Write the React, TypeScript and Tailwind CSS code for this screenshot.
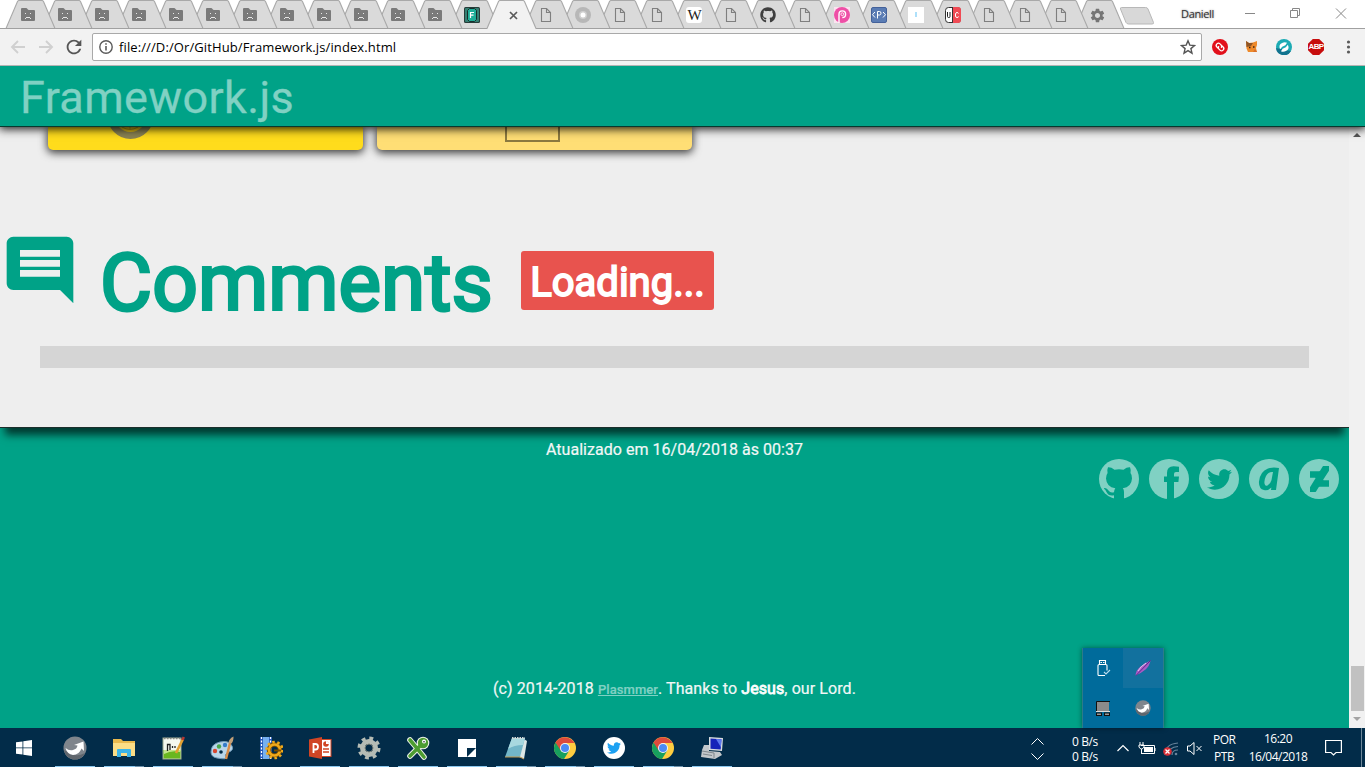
import type { ReactNode } from "react";
import { FaGithub, FaTwitter } from "react-icons/fa";
import { MdComment, MdSettings, MdRefresh } from "react-icons/md";

const SadFolder = () => (
  <svg width="14" height="14" viewBox="0 0 14 14">
    <path d="M1 0h4q1 0 1.500 1t1.500 1h5q1 0 1 1v9q0 1-1 1H1q-1 0-1-1V1q0-1 1-1z" fill="#7a7a7a" />
    <path d="M4 5h1v1H4zM9 5h1v1H9zM5 9h4v1H5zM4 10h1v1H4zM9 10h1v1H9z" fill="#e6e6e6" />
  </svg>
);

const Page = () => (
  <svg width="12" height="14" viewBox="0 0 12 14">
    <path d="M1.500.5h5l4 4v9h-9zM6.500.5v4h4" fill="none" stroke="#7f7f7f" strokeWidth="1.1" />
  </svg>
);

const FrameworkIcon = () => (
  <svg width="16" height="16" viewBox="0 0 16 16">
    <rect width="16" height="16" rx="1.5" fill="#263c39" />
    <rect x="1" y="1" width="14" height="14" rx="1" fill="#357f72" />
    <path d="M5.500 1.500h5l2 2v9l-2 2h-5l-2-2v-9z" fill="#1fae98" stroke="#182f2c" />
    <path d="M6.500 11V5.500H10M6.500 8.200h3" fill="none" stroke="#fff" strokeWidth="1.200" />
  </svg>
);

const Ring = () => (
  <svg width="16" height="16" viewBox="0 0 16 16">
    <circle cx="8" cy="8" r="8" fill="#b7b7b7" />
    <circle cx="8" cy="8" r="4" fill="#cfcfcf" />
    <circle cx="8" cy="8" r="2.5" fill="#fff" />
  </svg>
);

const Wiki = () => (
  <span className="flex h-4 w-4 items-center justify-center rounded-[3px] bg-white font-['Liberation_Serif',serif] text-[15px] leading-none tracking-[-1px] text-[#222]">
    W
  </span>
);

const PinkP = () => (
  <svg width="16" height="16" viewBox="0 0 16 16">
    <rect width="16" height="16" fill="#fbe3f0" />
    <circle cx="8" cy="8" r="8" fill="#ee4fa6" />
    <path d="M5 16V7.200a3.300 3.300 0 1 1 3.300 3.300" fill="none" stroke="#fff" strokeWidth="1.400" />
    <circle cx="8.300" cy="7.200" r="1.400" fill="none" stroke="#fff" strokeWidth=".8" />
  </svg>
);

const CodeP = () => (
  <svg width="16" height="16" viewBox="0 0 16 16">
    <rect x=".5" y=".5" width="15" height="15" rx="1.5" fill="#5a7cb4" stroke="#44619a" />
    <path d="M4 5L1.500 7.700 4 10.500M12 5l2.500 2.700L12 10.500M6.500 11.500v-7h2q1.500 0 1.500 1.700T8.500 8h-2" fill="none" stroke="#fff" />
  </svg>
);

const InfoIcon = () => (
  <svg width="16" height="16" viewBox="0 0 16 16">
    <rect width="16" height="16" fill="#fff" />
    <rect x="7" y="5" width="2" height="5" fill="#aee0fa" />
  </svg>
);

const UC = () => (
  <svg width="16" height="16" viewBox="0 0 16 16">
    <rect x=".5" y=".5" width="15" height="15" rx="3" fill="#fff" stroke="#333" />
    <path d="M8 0h5q3 0 3 3v10q0 3-3 3H8z" fill="#f04a54" />
    <path d="M7.500 0v16" stroke="#333" />
    <path d="M2.500 5v4.500q0 1 1 1h.5q1 0 1-1V5" fill="none" stroke="#222" />
    <path d="M13.500 6.500q-.3-1-1.500-1t-1.500 1.500v2q0 1.500 1.500 1.500t1.500-1" fill="none" stroke="#fff" />
  </svg>
);

const CloseX = () => (
  <svg width="9" height="9" viewBox="0 0 9 9">
    <path d="M1 1l7 7M8 1L1 8" stroke="#5a5a5a" strokeWidth="1.7" />
  </svg>
);

const GitCat = () => <FaGithub size={16} color="#3f3f3f" />;
const Gear = () => <MdSettings size={17} color="#757575" />;

type TabSpec = { icon: () => ReactNode; active?: boolean; narrow?: boolean };

const tabs: TabSpec[] = [
  ...Array.from({ length: 12 }, () => ({ icon: SadFolder })),
  { icon: FrameworkIcon },
  { icon: CloseX, active: true },
  { icon: Page },
  { icon: Ring },
  { icon: Page },
  { icon: Page },
  { icon: Wiki },
  { icon: Page },
  { icon: GitCat },
  { icon: Page },
  { icon: PinkP },
  { icon: CodeP },
  { icon: InfoIcon },
  { icon: UC, narrow: true },
  { icon: Page, narrow: true },
  { icon: Page, narrow: true },
  { icon: Page, narrow: true },
  { icon: Gear, narrow: true },
];

const Tab = ({ tab, z }: { tab: TabSpec; z: number }) => (
  <div className={`relative h-[29px] shrink-0 ${tab.narrow ? "w-9" : "w-[37px]"}`} style={{ zIndex: tab.active ? 60 : z }}>
    <svg className="absolute top-0 left-0 overflow-visible" width="49" height="29" viewBox="0 0 49 29">
      <path d="M0 29L.5 28L11.500 1.500Q12 .5 13 .5H36Q37 .5 37.500 1.500L48.500 28L49 29z" fill={tab.active ? "#f2f2f2" : "#dadada"} />
      <path d="M0 28.500L11.500 1.500Q12 .5 13 .5H36Q37 .5 37.500 1.500L49 28.500" fill="none" stroke="#a9a9a9" strokeWidth="1.1" />
      {!tab.active && <path d="M0 28.500H49" stroke="#a0a0a0" />}
    </svg>
    <div className={`relative flex h-[30px] items-center justify-center ${tab.active ? "w-[45px] pl-2" : "w-11"}`}>
      <tab.icon />
    </div>
  </div>
);

const TabStrip = () => (
  <div className="relative z-20 flex h-[29px] bg-white pl-[6px] shadow-[inset_0_-1px_0_#a0a0a0]">
    {tabs.map((t, i) => (
      <Tab key={i} tab={t} z={50 - i} />
    ))}
    <svg className="ml-[8px] mt-[7px] shrink-0" width="36" height="18" viewBox="0 0 36 18">
      <path d="M2.500.5H26.500Q28.500.5 29 2L34.500 15.500Q35 17 33 17H9.500Q8 17 7 15.500L1.500 2Q1 .5 2.500.5z" fill="#d8d8d8" stroke="#b8b8b8" />
    </svg>
    <span className="mt-[7px] ml-[26px] w-[64px] text-[11px] leading-[14px] tracking-[-0.35px] text-[#333] [text-shadow:0_0_2px_#777]">Daniell</span>
    <svg className="mt-[7px] shrink-0" width="103" height="13" viewBox="0 0 103 13" fill="none" stroke="#888">
      <path d="M0 6.500h10M45.500 3.500h7v7h-7zM47.500 3.500v-2h7v7h-2M91 1.500l10 10M101 1.500l-10 10" />
    </svg>
  </div>
);

const Toolbar = () => (
  <div className="relative z-20 flex h-[37px] items-center border-b border-[#b4b4b4] bg-[#f2f2f2] pl-[10px]">
    <svg width="44" height="14" viewBox="0 0 44 14" fill="none" stroke="#d0d0d0" strokeWidth="1.9">
      <path d="M15 7H2.500M8 1L2 7l6 6M29 7h12.500M36 1l6 6-6 6" />
    </svg>
    <MdRefresh className="ml-[9px]" size={22} color="#555" />
    <div className="ml-[7px] flex h-7 w-[1110px] items-center rounded-[2px] border border-[#a9a9a9] bg-white pr-[5px] pl-[6px]">
      <svg width="14" height="14" viewBox="0 0 14 14">
        <circle cx="7" cy="7" r="6.200" fill="none" stroke="#5a5a5a" strokeWidth="1.400" />
        <path d="M7 6v4.500M7 3.200v1.600" stroke="#5a5a5a" strokeWidth="1.600" />
      </svg>
      <span className="ml-[6px] flex-1 pt-px text-[13px] tracking-[0.11px] text-black">file:///D:/Or/GitHub/Framework.js/index.html</span>
      <svg width="16" height="16" viewBox="0 0 16 16">
        <path d="M8 1.800l1.800 4.300 4.700.4-3.600 3.100 1.100 4.600L8 11.700l-4 2.500 1.100-4.600L1.500 6.500l4.700-.4z" fill="none" stroke="#555" strokeWidth="1.400" />
      </svg>
    </div>
    <div className="ml-[10px] flex items-center gap-4">
      <svg width="16" height="16" viewBox="0 0 16 16">
        <circle cx="8" cy="8" r="8" fill="#e2101b" />
        <g transform="rotate(45 8 8)" fill="none" stroke="#fff" strokeWidth="1.300">
          <path d="M8.500 10.200H5.800a2.200 2.200 0 0 1 0-4.400h1.700q1.500.2 2 2" />
          <path d="M7.500 5.800h2.700a2.200 2.200 0 0 1 0 4.400H8.500q-1.500-.2-2-2" />
        </g>
      </svg>
      <svg width="16" height="16" viewBox="0 0 16 16">
        <path d="M2 2l3 2 4-.5L13 2v4l-1 3 1 4H4L2.500 9.500z" fill="#ee8a2b" />
        <path d="M2 2l3 2h4L7 7 2.500 8z" fill="#8f5526" />
        <path d="M5 8.500h1.500M9 8h1.500" stroke="#3b2415" strokeWidth="1.300" />
        <path d="M11 10l2 3h-4z" fill="#d9702a" />
      </svg>
      <svg width="16" height="16" viewBox="0 0 16 16">
        <circle cx="8" cy="8" r="8" fill="#1cabb4" />
        <path d="M0 9a8 8 0 0 0 15 3L9 11z" fill="#12738f" />
        <g transform="rotate(-25 8 8)">
          <path d="M3.500 8.500Q3.500 3.500 8 3.500q3 0 4.500 2L10 7H6.500zM12.500 7.500q0 5-4.500 5-3 0-4.500-2L6 9h3.500z" fill="#fff" />
        </g>
      </svg>
      <div className="flex h-4 w-4 items-center justify-center bg-[#c70d0d] font-['Liberation_Sans',sans-serif] text-[8px] font-bold leading-none tracking-[-0.6px] text-white [clip-path:polygon(30%_0,70%_0,100%_30%,100%_70%,70%_100%,30%_100%,0_70%,0_30%)]">ABP</div>
      <svg width="16" height="16" viewBox="0 0 16 16" fill="#5a5a5a">
        <circle cx="8.500" cy="3" r="1.600" />
        <circle cx="8.500" cy="8" r="1.600" />
        <circle cx="8.500" cy="13" r="1.600" />
      </svg>
    </div>
  </div>
);

const Cards = () => (
  <div className="flex gap-[14px] pl-12">
    <div className="h-[23px] w-[315px] rounded-b-[5px] bg-[#ffdc1c] pl-[60px] shadow-[0_2px_8px_1px_rgba(0,0,0,0.75)]">
      <svg width="46" height="13" viewBox="0 0 46 13">
        <circle cx="22.500" cy="-11" r="19.500" fill="#dcb817" stroke="#8b8353" strokeWidth="7" />
        <path d="M14 0q8 5 16 0M22 0v3" stroke="#a28c1c" fill="none" />
      </svg>
    </div>
    <div className="h-[23px] w-[315px] rounded-b-[5px] bg-[#ffde75] pl-32 shadow-[0_2px_8px_1px_rgba(0,0,0,0.75)]">
      <div className="h-[15px] w-[55px] border-2 border-t-0 border-[#8c7a40]" />
    </div>
  </div>
);

const Disc = ({ children }: { children: ReactNode }) => (
  <div className="flex h-10 w-10 items-center justify-center rounded-full bg-[#80d1c3] text-[#00a287]">{children}</div>
);

const Footer = () => (
  <footer className="flex h-[301px] flex-col bg-[#00a287] text-[#f2f7f6]">
    <p className="relative z-10 pt-[13px] text-center text-base leading-[19px] tracking-[0.03px] [-webkit-text-stroke:0.2px_#f2f7f6]">Atualizado em 16/04/2018 às 00:37</p>
    <div className="flex justify-end gap-[10px] pr-[10px]">
      <Disc>
        <svg width="40" height="40" viewBox="0 0 40 40" fill="currentColor">
          <path d="M9 8.300Q12 8 15.500 10.700 20 9.700 24.500 10.700 28 8 31 8.300 32.200 11 31.500 14 33.200 16 33 19.500 32.500 28 23.800 29.200 25 30.500 25 33V40H15V36.300Q9.500 37.500 7.500 33 6.500 30.800 5 29.800 4.600 28.800 6 28.900 8 29.200 9.500 31.500 11.500 34.500 15 33.200 15.200 30.500 16.300 29.200 7.500 28 7 19.500 7 16 8.600 14 7.800 11 9 8.300z" />
        </svg>
      </Disc>
      <Disc>
        <svg width="40" height="40" viewBox="0 0 40 40" fill="currentColor">
          <path d="M18 40V23H15V17.500H18V14Q18 7.300 24.500 7.300 27.800 7.300 30 7.800V13H27Q25 13 25 15V17.500H30L29.400 23H25V40z" />
        </svg>
      </Disc>
      <Disc><FaTwitter size={25} /></Disc>
      <Disc>
        <svg width="22" height="24" viewBox="0 0 22 24">
          <path d="M21 1L18 23h-5l.4-2.500Q10 24 6 23 .5 21.500 1 14.500 2 4.500 10 1.500 14 0 21 1zM15 5Q10.500 4.500 8 9 6 13 6.500 16.500 7 19.500 9.500 18.500 12.500 17 13.500 13z" fill="currentColor" />
        </svg>
      </Disc>
      <Disc>
        <svg width="19" height="26" viewBox="0 0 320 512" preserveAspectRatio="none">
          <path d="M320 93.200l-98.200 179.100 7.400 9.500H320v127.700H159.100l-13.500 9.200-43.700 84c-.3 0-8.600 8.600-9.200 9.200H0v-93.200l93.200-179.400-7.400-9.200H0V102.500h156l13.500-9.200 43.700-84c.3 0 8.600-8.600 9.200-9.200H320v93.100z" fill="currentColor" />
        </svg>
      </Disc>
    </div>
    <p className="mt-[180px] text-center text-base leading-[19px] tracking-[0.08px] [-webkit-text-stroke:0.2px]">
      (c) 2014-2018 <span className="text-[13px] font-medium text-[#80d1c3] underline">Plasmmer</span>. Thanks to{" "}
      <span className="[-webkit-text-stroke:0.8px_white]">Jesus</span>, our Lord.
    </p>
  </footer>
);

const Scrollbar = () => (
  <div className="flex w-4 flex-col items-center bg-[#f1f1f1]">
    <svg width="16" height="16" viewBox="0 0 16 16"><path d="M4 10l4-4 4 4z" fill="#555" /></svg>
    <div className="mt-[523px] h-[45px] w-[13px] bg-[#c1c1c1]" />
    <svg width="16" height="16" viewBox="0 0 16 16"><path d="M4 6l4 4 4-4z" fill="#a3a3a3" /></svg>
  </div>
);

const Swirl = ({ size }: { size: number }) => (
  <svg width={size} height={size} viewBox="0 0 24 24">
    <circle cx="12" cy="12" r="11.500" fill="#7f858c" />
    <path d="M1 14a11 11 0 0 0 21 3q-8 4-12 1z" fill="#60666d" />
    <path d="M2.500 12Q6 15 10 14t4.500-4.500L11 9 20.500 5.500 21 15l-2.500-2.500Q16 19 10 19 4 18 2.500 12z" fill="#fff" />
  </svg>
);

const TrayPopup = () => (
  <div className="absolute top-[648px] left-[1082px] grid h-20 w-[82px] grid-cols-2 grid-rows-2 place-items-center border border-y-0 border-[#2c7b8a] bg-[#006b9b] shadow-[0_0_5px_rgba(0,0,0,0.45)]">
    <svg width="16" height="18" viewBox="0 0 16 18" fill="none" stroke="#fff" strokeWidth="1.100">
      <path d="M4.500 5.500v-4h6v4M5.500 3.500h1.500M8 3.500h1.500M10 16.500H4q-1 0-1-1V6.500q0-1 1-1h7q1 0 1 1v5" />
      <path d="M9 13l2 2 4-4" stroke="#b9dcee" />
    </svg>
    <div className="flex h-full w-full items-center justify-center bg-[#12719e]">
      <svg width="18" height="18" viewBox="0 0 18 18">
        <path d="M1.500 16.500Q2 11 6.500 7.500T16.500 1.500Q15.500 7 11.500 10.500T1.500 16.500z" fill="#a95cc6" />
        <path d="M2 16.500L16.500 1.500" stroke="#5f2a8c" />
        <path d="M4 12q2.500-4.500 8-8" stroke="#e2c9ef" fill="none" />
      </svg>
    </div>
    <svg width="16" height="17" viewBox="0 0 16 17">
      <path d="M1.500 11V1.500H15" fill="none" stroke="#111" />
      <rect x="2" y="2" width="12" height="9" fill="#8b8b8b" />
      <path d="M1 11.500h14" stroke="#ddd" />
      <rect x="1.500" y="13" width="5" height="2.500" fill="#999" stroke="#111" />
      <rect x="9.500" y="13" width="5" height="2.500" fill="#999" stroke="#111" />
    </svg>
    <Swirl size={16} />
  </div>
);

const Explorer = () => (
  <svg width="22" height="20" viewBox="0 0 22 20">
    <path d="M0 1h8l2 2h12v15H0z" fill="#e9b94e" />
    <path d="M0 5h22v13H0z" fill="#fbdd86" />
    <path d="M4 19v-7q0-1 1-1h12q1 0 1 1v7h-4v-4H8v4z" fill="#3bb4e8" />
  </svg>
);
const NotepadPP = () => (
  <svg width="23" height="24" viewBox="0 0 23 24">
    <rect x="1" y="2" width="18" height="21" fill="#f5f8ef" stroke="#9aa58d" />
    <path d="M1.500 14h17v8.500h-17z" fill="#69b71f" />
    <path d="M2 14h17l-1 2Q10 14 2 18z" fill="#c4e58c" />
    <path d="M2 2.500h17" stroke="#8b8b8b" strokeDasharray="1.500 1.500" strokeWidth="1.500" />
    <path d="M5.500 15V8.500H8V14M10.500 10v2M13 10v2" stroke="#222" fill="none" strokeWidth="1.300" />
    <path d="M14 17L21 3" stroke="#e2a032" strokeWidth="2.600" />
    <path d="M20.500 4l1.300-3" stroke="#b63832" strokeWidth="2.600" />
  </svg>
);
const Paint = () => (
  <svg width="25" height="25" viewBox="0 0 25 25">
    <path d="M1 16Q1 8 10 6t12 4q2 4-3 6t-3 5-9 1q-6-1-6-6z" fill="#b9d6ea" stroke="#6f9ab8" />
    <circle cx="5" cy="15" r="2.200" fill="#d8472f" />
    <circle cx="9" cy="10.500" r="2.200" fill="#49a74a" />
    <circle cx="15" cy="9" r="2.200" fill="#357cc9" />
    <circle cx="11" cy="16" r="1.800" fill="#022c49" />
    <path d="M16 23L20 7" stroke="#d98c48" strokeWidth="2.500" />
    <path d="M18.500 7q0-4 5-6.500 0 5-2 7z" fill="#c2a078" />
  </svg>
);
const FilmGear = () => (
  <svg width="24" height="24" viewBox="0 0 24 24">
    <rect x="1" y="1" width="12" height="22" fill="#2257b8" />
    <path d="M4 1h6v22H4z" fill="#76b0f0" />
    <path d="M2.500 1v22M11.500 1v22" stroke="#fff" strokeWidth="1.300" strokeDasharray="2 1.500" />
    <circle cx="15.500" cy="14" r="5.500" fill="none" stroke="#7a4d00" strokeWidth="4.500" />
    <circle cx="15.500" cy="14" r="5.500" fill="none" stroke="#f0aa1c" strokeWidth="2.600" />
    <circle cx="15.500" cy="14" r="8" fill="none" stroke="#f0aa1c" strokeWidth="2.600" strokeDasharray="2.500 2.530" />
    <path d="M15 14.500h7" stroke="#7a4d00" strokeWidth="2" />
  </svg>
);
const PowerPoint = () => (
  <svg width="24" height="24" viewBox="0 0 24 24">
    <rect x="12" y="3.500" width="11" height="17" fill="#fff" stroke="#d04525" />
    <path d="M15 13h6M15 16h6" stroke="#d04525" strokeWidth="1.400" />
    <circle cx="18" cy="8" r="2.800" fill="#d04525" />
    <path d="M18 8V5a3 3 0 0 1 3 3z" fill="#fff" />
    <path d="M1 3.500L14 1v22L1 20.500z" fill="#d04525" />
    <path d="M5.500 17V8H7.500q2.500 0 2.500 2.700T7.500 13.500H6" stroke="#fff" strokeWidth="1.800" fill="none" />
  </svg>
);
const BigGear = () => (
  <svg width="24" height="24" viewBox="0 0 24 24">
    <circle cx="12" cy="12" r="6.500" fill="none" stroke="#b5bcb5" strokeWidth="5" />
    <circle cx="12" cy="12" r="9.800" fill="none" stroke="#b5bcb5" strokeWidth="3.500" strokeDasharray="3.850 3.850" />
    <circle cx="12" cy="12" r="4" fill="#022c49" stroke="#7c857d" />
  </svg>
);
const GreenX = () => (
  <svg width="24" height="24" viewBox="0 0 24 24">
    <g fill="none" strokeLinecap="round">
      <path d="M4 4Q10 11 18 21M4 20L16 8" stroke="#eef2e9" strokeWidth="5.600" />
      <circle cx="17" cy="7" r="6.300" fill="#eef2e9" />
      <path d="M4 4Q10 11 18 21M4 20L16 8" stroke="#4c9c31" strokeWidth="3.600" />
    </g>
    <circle cx="17" cy="7" r="5.200" fill="#4c9c31" />
    <circle cx="18" cy="5.500" r="2" fill="#fff" />
    <circle cx="18" cy="5.700" r=".8" fill="#222" />
  </svg>
);
const Note = () => (
  <svg width="18" height="18" viewBox="0 0 18 18">
    <path d="M0 0h18v18H0z" fill="#fff" />
    <path d="M9 9h9L9 18z" fill="#022c49" />
  </svg>
);
const Notepad = () => (
  <svg width="24" height="24" viewBox="0 0 24 24">
    <path d="M20 3l3 2-3 18-5-2z" fill="#dde7e6" />
    <path d="M8 2h13l-5 19H1z" fill="#72b6c8" />
    <path d="M8 2h13l-2 7Q10 9 4 13z" fill="#a8d8df" />
    <path d="M8 2h13" stroke="#d0d6d6" strokeWidth="2" strokeDasharray="1.500 1" />
    <path d="M1 21h15l4 2" stroke="#c2974a" fill="none" />
  </svg>
);
const Chrome = () => (
  <svg width="22" height="22" viewBox="0 0 22 22">
    <circle cx="11" cy="11" r="11" fill="#ffcd40" />
    <path d="M11 11L1.500 5.500A11 11 0 0 0 10 22L15.300 13.500z" fill="#17a05e" />
    <path d="M1.500 5.500A11 11 0 0 1 20.500 6H11L6.700 13.500z" fill="#de4b3c" />
    <circle cx="11" cy="11" r="5" fill="#f4f4f4" />
    <circle cx="11" cy="11" r="4" fill="#4c8bf5" />
  </svg>
);
const Twitter = () => (
  <div className="flex h-[22px] w-[22px] items-center justify-center rounded-full bg-white">
    <FaTwitter size={14} color="#1da1f2" />
  </div>
);
const Computer = () => (
  <svg width="24" height="24" viewBox="0 0 24 24">
    <path d="M9 1l14 1-1 13-13-1z" fill="#d7dcdf" />
    <path d="M10.500 2.500l11 .8-.8 10.200-10.200-.8z" fill="#1624b9" />
    <path d="M16 3l5.500.3-.6 8z" fill="#5c78ee" />
    <path d="M4 9h5v6l11 1 2 3-7 4-14-2 1-7z" fill="#c3c8cb" />
    <path d="M2 15l12 2v5M3 18l9 1.500" stroke="#80878c" fill="none" />
  </svg>
);

type TaskApp = { icon: ReactNode; open?: boolean; many?: boolean };
const apps: TaskApp[] = [
  { icon: <Swirl size={24} />, open: true },
  { icon: <Explorer />, open: true, many: true },
  { icon: <NotepadPP />, open: true },
  { icon: <Paint />, open: true, many: true },
  { icon: <FilmGear /> },
  { icon: <PowerPoint />, open: true },
  { icon: <BigGear />, open: true },
  { icon: <GreenX />, open: true },
  { icon: <Note />, open: true },
  { icon: <Notepad />, open: true, many: true },
  { icon: <Chrome />, open: true, many: true },
  { icon: <Twitter />, open: true },
  { icon: <Chrome />, open: true, many: true },
  { icon: <Computer />, open: true },
];

const Taskbar = () => (
  <div className="flex h-[39px] bg-[#022c49] text-[12px] leading-[15px] text-white">
    <div className="flex w-[55px] items-center pl-4">
      <svg width="16" height="16" viewBox="0 0 16 16" fill="#fff">
        <path d="M0 2.300L6.500 1.400V7.500H0zM7.300 1.300L16 0v7.500H7.300zM0 8.300h6.500v6.200L0 13.700zM7.300 8.300H16V16l-8.700-1.300z" />
      </svg>
    </div>
    <div className="flex gap-[9px]">
      {apps.map((a, i) => (
        <div key={i} className="flex w-10 flex-col">
          <div className="flex h-[38px] items-center justify-center pt-[2px]">{a.icon}</div>
          {a.open && (
            <div className="flex h-px bg-[#8cc8ee]">
              {a.many && <div className="ml-auto w-[9px] bg-[#6e93ad]" />}
            </div>
          )}
        </div>
      ))}
    </div>
    <div className="ml-[299px] flex w-[41px] flex-col items-start justify-center gap-[8px] pt-[2px]">
      {["M0 6.500l6-6 6 6", "M0 .5l6 6 6-6"].map((d) => (
        <svg key={d} width="13" height="7" viewBox="0 0 12 7" fill="none" stroke="#fff"><path d={d} /></svg>
      ))}
    </div>
    <div className="flex w-[45px] flex-col pt-[6px] tracking-[-0.4px]">
      <span>0 B/s</span>
      <span>0 B/s</span>
    </div>
    <div className="flex items-center">
      <svg width="86" height="18" viewBox="0 0 86 18" fill="none" stroke="#fff">
        <path d="M.5 12L6 6.500 11.500 12" strokeWidth="1.200" />
        <path d="M24 6.500h13.500v8H24M38 9v3" />
        <path d="M27 8h9v5h-9z" fill="#fff" stroke="none" />
        <path d="M23 3v3M26 3v3M22 6h5v2q-1 2-2.500 2T22 8zM24.500 10v4" />
        <path d="M48 16q0-11 13-12M51.500 16q0-8 9.500-8.500M55 16q0-5 6-5" stroke="#68839a" strokeWidth="1.200" />
        <circle cx="59" cy="15" r="1.300" fill="#68839a" stroke="none" />
        <circle cx="50.500" cy="12.500" r="4.300" fill="#d92e36" stroke="none" />
        <path d="M48.500 10.500l4 4M52.500 10.500l-4 4" strokeWidth="1.300" />
        <path d="M70.500 7h2.500l4-3.500v12L73 12h-2.500zM79.500 7l5 5M84.500 7l-5 5" />
      </svg>
    </div>
    <div className="ml-[10px] flex w-[36px] flex-col gap-[2px] pt-[4px]">
      <span className="tracking-[-0.5px]">POR</span>
      <span className="ml-px tracking-[-0.4px]">PTB</span>
    </div>
    <div className="flex w-[58px] flex-col items-center gap-[3px] pt-[3px] tracking-[-0.5px]">
      <span>16:20</span>
      <span className="whitespace-nowrap">16/04/2018</span>
    </div>
    <svg className="mt-[11px] ml-[18px]" width="17" height="18" viewBox="0 0 17 18" fill="none" stroke="#fff" strokeWidth="1.200">
      <path d="M.6 1.500h15.800v12H11L8.500 16 6 13.500H.6z" />
    </svg>
    <div className="ml-auto w-1 border-l border-[#6d8799]" />
  </div>
);

export default function App() {
  return (
    <div className="relative flex h-[767px] w-[1365px] flex-col overflow-hidden bg-white font-['Open_Sans',sans-serif]">
      <TabStrip />
      <Toolbar />
      <header className="relative z-10 flex h-[61px] items-center border-b border-[#07392f] bg-[#00a287] pl-5 font-[Roboto,sans-serif] text-[45px] leading-none tracking-[0.35px] text-[#80d1c3] shadow-[0_1px_9px_1px_rgba(0,0,0,0.9)] [-webkit-text-stroke:0.3px_#80d1c3]">
        <span className="mt-[2px]">Framework.js</span>
      </header>
      <div className="flex h-[601px] font-[Roboto,sans-serif]">
        <div className="w-[1349px] overflow-hidden">
          <main className="relative h-[300px] bg-[#eee] shadow-[0_1px_0_#1b2e2b,0_13px_8px_-5px_rgba(0,0,0,0.65)]">
            <Cards />
            <div className="flex h-[183px] pt-[80px]">
              <MdComment size={80} color="#00a287" />
              <h1 className="mt-[6px] ml-[20px] w-[421px] text-[80px] leading-[94px] tracking-[0.1px] text-[#00a287] [-webkit-text-stroke:3px_#00a287]">Comments</h1>
              <div className="mt-[21px] flex h-[59px] w-[193px] items-center justify-center rounded-[3px] bg-[#e8534e] pt-[5px] text-[40px] text-white [-webkit-text-stroke:1.8px_white]">Loading...</div>
            </div>
            <div className="mt-[13px] ml-10 h-[22px] w-[1269px] bg-[#d5d5d5]" />
          </main>
          <Footer />
        </div>
        <Scrollbar />
      </div>
      <Taskbar />
      <TrayPopup />
    </div>
  );
}
